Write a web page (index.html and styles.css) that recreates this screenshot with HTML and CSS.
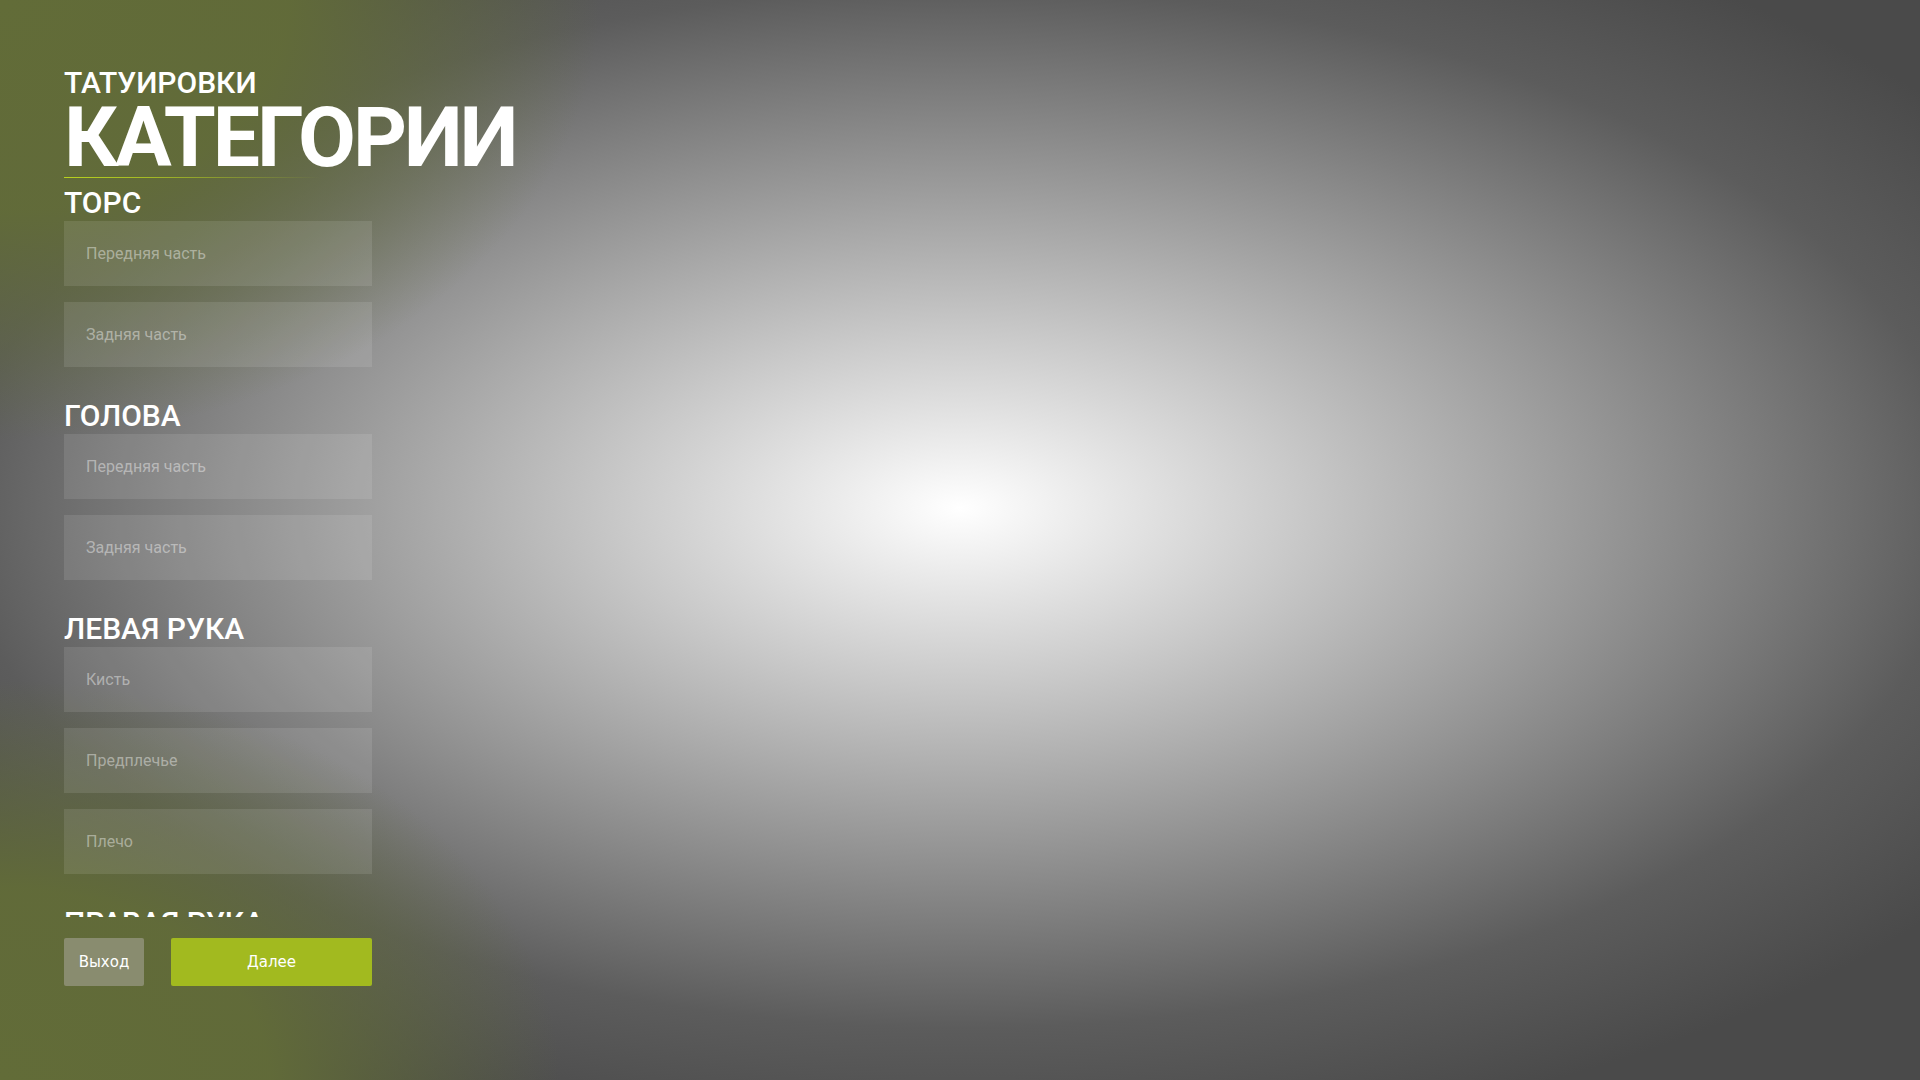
FILE: index.html
```html
<!DOCTYPE html>
<html lang="ru">
<head>
<meta charset="utf-8">
<title>Татуировки — категории</title>
<link rel="stylesheet" href="styles.css">
</head>
<body>
<main class="panel">
  <header class="panel-head">
    <div class="kicker">ТАТУИРОВКИ</div>
    <h1 class="title">КАТЕГОРИИ</h1>
    <div class="rule"></div>
  </header>

  <div class="list">
    <section class="group">
      <h2 class="group-title">ТОРС</h2>
      <div class="options">
        <div class="option">Передняя часть</div>
        <div class="option">Задняя часть</div>
      </div>
    </section>

    <section class="group">
      <h2 class="group-title">ГОЛОВА</h2>
      <div class="options">
        <div class="option">Передняя часть</div>
        <div class="option">Задняя часть</div>
      </div>
    </section>

    <section class="group">
      <h2 class="group-title">ЛЕВАЯ РУКА</h2>
      <div class="options">
        <div class="option">Кисть</div>
        <div class="option">Предплечье</div>
        <div class="option">Плечо</div>
      </div>
    </section>

    <section class="group">
      <h2 class="group-title">ПРАВАЯ РУКА</h2>
      <div class="options">
        <div class="option">Кисть</div>
        <div class="option">Предплечье</div>
        <div class="option">Плечо</div>
      </div>
    </section>
  </div>

  <div class="actions">
    <button class="btn btn-exit" type="button">Выход</button>
    <button class="btn btn-next" type="button">Далее</button>
  </div>
</main>
</body>
</html>
```

FILE: styles.css
```css
html, body {
  margin: 0;
  padding: 0;
}

body {
  width: 1920px;
  height: 1080px;
  overflow: hidden;
  font-family: Roboto, "Noto Sans", "Liberation Sans", sans-serif;
  color: #fff;
  background-color: #4a4a4a;
  background-image:
    radial-gradient(ellipse 600px 440px at 0 0,
      rgba(98, 108, 56, 1) 0%,
      rgba(98, 108, 56, 0.95) 48%,
      rgba(98, 108, 56, 0) 100%),
    radial-gradient(ellipse 560px 400px at 0 100%,
      rgba(98, 108, 56, 1) 0%,
      rgba(98, 108, 56, 0.95) 48%,
      rgba(98, 108, 56, 0) 100%),
    radial-gradient(ellipse 1250px 650px at 960px 508px,
      #ffffff 0%,
      #c9c9c9 27%,
      #5c5c5c 80%,
      #4a4a4a 100%);
  background-repeat: no-repeat;
}

/* left menu column */
.panel {
  width: 308px;
  padding: 68px 0 0 64px;
  display: flex;
  flex-direction: column;
}

.panel-head {
  display: flex;
  flex-direction: column;
}

.kicker {
  font-size: 30px;
  line-height: 30px;
  font-weight: 500;
  white-space: nowrap;
}

.title {
  margin: 4px 0 0;
  font-size: 84px;
  line-height: 72px;
  font-weight: 700;
  letter-spacing: -3px;
  white-space: nowrap;
}

.rule {
  width: 256px;
  height: 1px;
  margin-top: 3px;
  background: linear-gradient(90deg,
    #b8d21e 0%,
    rgba(184, 210, 30, 0.75) 35%,
    rgba(184, 210, 30, 0) 100%);
}

.list {
  height: 739px;
  box-sizing: border-box;
  padding-top: 10px;
  overflow: hidden;
  display: flex;
  flex-direction: column;
  gap: 34px;
}

.group {
  display: flex;
  flex-direction: column;
}

.group-title {
  margin: 0 0 3px;
  font-size: 30px;
  line-height: 30px;
  font-weight: 500;
  white-space: nowrap;
}

.options {
  display: flex;
  flex-direction: column;
  gap: 16px;
}

.option {
  flex: 0 0 65px;
  height: 65px;
  display: flex;
  align-items: center;
  padding-left: 22px;
  background: rgba(255, 255, 255, 0.1);
  color: rgba(255, 255, 255, 0.42);
  font-size: 16px;
  cursor: pointer;
}

/* bottom buttons */
.actions {
  display: flex;
  gap: 27px;
  margin-top: 21px;
}

.btn {
  height: 48px;
  padding: 0;
  border: 0;
  border-radius: 2px;
  font-family: "DejaVu Sans", sans-serif;
  font-size: 15px;
  color: #fff;
  cursor: pointer;
}

.btn-exit {
  width: 80px;
  background: #898c6f;
}

.btn-next {
  width: 201px;
  background: #a2ba1f;
}
```
